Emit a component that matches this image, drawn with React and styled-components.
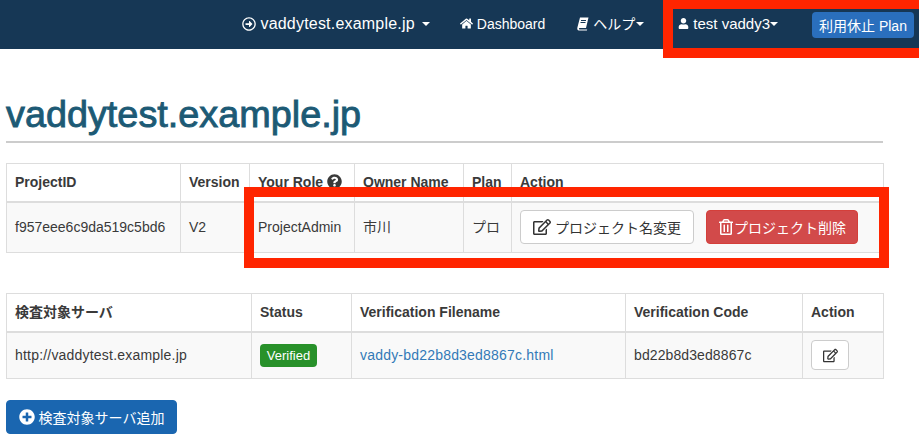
import React from 'react'
import styled, { createGlobalStyle } from 'styled-components'
import {
  FaRegArrowAltCircleRight,
  FaHome,
  FaUser,
  FaQuestionCircle,
  FaRegEdit,
  FaRegTrashAlt,
  FaPlusCircle,
} from 'react-icons/fa'

const GlobalStyle = createGlobalStyle`
  html, body {
    margin: 0;
    padding: 0;
    background: #fff;
    overflow: hidden;
  }
  body {
    font-family: "Liberation Sans", "Noto Sans CJK JP", sans-serif;
    font-size: 14px;
    line-height: 20px;
    color: #3a3a3a;
  }
  * {
    box-sizing: border-box;
  }
`

const Page = styled.div`
  position: relative;
  width: 919px;
  height: 443px;
  overflow: hidden;
`

const Navbar = styled.nav`
  display: flex;
  align-items: center;
  justify-content: flex-end;
  height: 49px;
  padding-right: 5px;
  background: #163755;
  color: #fff;
`

const NavItem = styled.a`
  display: flex;
  align-items: center;
  gap: 4px;
  margin-right: ${(p) => p.$after}px;
  margin-bottom: 2px;
  font-size: ${(p) => p.$size || 14}px;
  letter-spacing: ${(p) => p.$spacing || 0}px;
  color: #fff;
  white-space: nowrap;
`

const Caret = styled.span`
  display: inline-block;
  margin-left: ${(p) => p.$left || 0}px;
  border-top: 4px solid #fff;
  border-left: 4px solid transparent;
  border-right: 4px solid transparent;
`

const PlanButton = styled.button`
  width: 102px;
  height: 26px;
  padding: 0;
  border: 0;
  border-radius: 4px;
  background: #2a6fbd;
  color: #fff;
  font: 14px "Liberation Sans", "Noto Sans CJK JP", sans-serif;
`

const Content = styled.main`
  width: 877px;
  margin-left: 6px;
`

const Title = styled.h1`
  margin: 0 0 20px;
  padding: 46px 0 8px;
  height: 94px;
  border-bottom: 2px solid #ccc;
  font-size: 37.8px;
  line-height: 38px;
  font-weight: 400;
  -webkit-text-stroke: 0.9px #1c5a75;
  color: #1c5a75;
`

const Table = styled.table`
  width: 877px;
  margin-bottom: ${(p) => p.$after}px;
  table-layout: fixed;
  border-collapse: collapse;
  border: 1px solid #ddd;
`

const HeadCell = styled.th`
  height: ${(p) => p.$height}px;
  padding: 0 8px;
  border: 1px solid #ddd;
  border-bottom-width: 2px;
  text-align: left;
  font-weight: 700;
  white-space: nowrap;
`

const BodyRow = styled.tr`
  background: #f9f9f9;
`

const Cell = styled.td`
  height: ${(p) => p.$height}px;
  padding: 0 8px;
  border: 1px solid #ddd;
  letter-spacing: ${(p) => p.$spacing || 0}px;
  white-space: nowrap;
`

const Button = styled.button`
  display: inline-flex;
  align-items: center;
  justify-content: center;
  gap: ${(p) => p.$gap || 0}px;
  width: ${(p) => p.$width}px;
  height: ${(p) => p.$height}px;
  margin-right: ${(p) => p.$after || 0}px;
  padding: 0;
  border: 1px solid ${(p) => (p.$variant === 'danger' ? '#d43f3a' : p.$variant === 'primary' ? '#1a66b0' : '#ccc')};
  border-radius: 4px;
  background: ${(p) => (p.$variant === 'danger' ? '#d24a4a' : p.$variant === 'primary' ? '#1a66b0' : '#fff')};
  color: ${(p) => (p.$variant ? '#fff' : '#333')};
  font: 14px "Liberation Sans", "Noto Sans CJK JP", sans-serif;
  vertical-align: middle;
`

const Verified = styled.span`
  display: inline-block;
  width: 57px;
  height: 23px;
  border-radius: 4px;
  background: #28912a;
  color: #fff;
  font-size: 13px;
  line-height: 23px;
  text-align: center;
`

const FileLink = styled.a`
  color: #337ab7;
`

const HelpIcon = styled(FaQuestionCircle)`
  margin-left: 4px;
  vertical-align: -2px;
  font-size: 15px;
`

// the red annotation frames drawn over the screenshot
const Annotation = styled.div`
  position: absolute;
  left: ${(p) => p.$left}px;
  top: ${(p) => p.$top}px;
  width: ${(p) => p.$width}px;
  height: ${(p) => p.$height}px;
  border: 10px solid #ff2500;
  border-top-width: ${(p) => p.$topBorder || 10}px;
  border-right-width: ${(p) => (p.$noRight ? 0 : 10)}px;
  pointer-events: none;
`

// slanted book, the icon packages only have the upright one
const BookIcon = () => (
  <svg width="12" height="14" viewBox="0 0 12 14">
    <path
      d="M3 .5h8.5L9 11H2.6c-.9 0-.9 1.6 0 1.6h7.6l-.3.9H2C.4 13.500 0 12 .4 10.500z"
      fill="#fff"
    />
    <path d="M4 3.500h5M3.500 5.500h5" stroke="#163755" strokeWidth="1" />
  </svg>
)

const projectCols = [174, 69, 105, 109, 48, 372]
const serverCols = [245, 100, 274, 177, 81]

export default function App() {
  return (
    <Page>
      <GlobalStyle />
      <Navbar>
        <NavItem $after={30} $size={16} $spacing={0.2}>
          <FaRegArrowAltCircleRight size={14} />
          vaddytest.example.jp
          <Caret $left={3} />
        </NavItem>
        <NavItem $after={32}>
          <FaHome size={13} />
          Dashboard
        </NavItem>
        <NavItem $after={34}>
          <BookIcon />
          ヘルプ
          <Caret $left={-3} />
        </NavItem>
        <NavItem $after={34} $size={15}>
          <FaUser size={11} />
          test vaddy3
          <Caret $left={-4} />
        </NavItem>
        <PlanButton>利用休止 Plan</PlanButton>
      </Navbar>

      <Content>
        <Title>vaddytest.example.jp</Title>

        <Table $after={40}>
          <colgroup>
            {projectCols.map((w) => (
              <col key={w} width={w} />
            ))}
          </colgroup>
          <thead>
            <tr>
              <HeadCell $height={38}>ProjectID</HeadCell>
              <HeadCell>Version</HeadCell>
              <HeadCell>
                Your Role
                <HelpIcon />
              </HeadCell>
              <HeadCell>Owner Name</HeadCell>
              <HeadCell>Plan</HeadCell>
              <HeadCell>Action</HeadCell>
            </tr>
          </thead>
          <tbody>
            <BodyRow>
              <Cell $height={51}>f957eee6c9da519c5bd6</Cell>
              <Cell>V2</Cell>
              <Cell>ProjectAdmin</Cell>
              <Cell>市川</Cell>
              <Cell>プロ</Cell>
              <Cell>
                <Button $width={174} $height={34} $after={12} $gap={4}>
                  <FaRegEdit size={18} />
                  プロジェクト名変更
                </Button>
                <Button $width={152} $height={34} $variant="danger">
                  <FaRegTrashAlt size={16} />
                  プロジェクト削除
                </Button>
              </Cell>
            </BodyRow>
          </tbody>
        </Table>

        <Table $after={21}>
          <colgroup>
            {serverCols.map((w) => (
              <col key={w} width={w} />
            ))}
          </colgroup>
          <thead>
            <tr>
              <HeadCell $height={38}>検査対象サーバ</HeadCell>
              <HeadCell>Status</HeadCell>
              <HeadCell>Verification Filename</HeadCell>
              <HeadCell>Verification Code</HeadCell>
              <HeadCell>Action</HeadCell>
            </tr>
          </thead>
          <tbody>
            <BodyRow>
              <Cell $height={47} $spacing={0.2}>http://vaddytest.example.jp</Cell>
              <Cell>
                <Verified>Verified</Verified>
              </Cell>
              <Cell $spacing={0.2}>
                <FileLink>vaddy-bd22b8d3ed8867c.html</FileLink>
              </Cell>
              <Cell $spacing={0.1}>bd22b8d3ed8867c</Cell>
              <Cell>
                <Button $width={38} $height={30}>
                  <FaRegEdit size={15} />
                </Button>
              </Cell>
            </BodyRow>
          </tbody>
        </Table>

        <Button $width={171} $height={34} $variant="primary" $gap={4}>
          <FaPlusCircle size={16} />
          検査対象サーバ追加
        </Button>
      </Content>

      <Annotation $left={663} $top={0} $width={256} $height={58} $topBorder={9} $noRight />
      <Annotation $left={244} $top={187} $width={645} $height={81} />
    </Page>
  )
}
